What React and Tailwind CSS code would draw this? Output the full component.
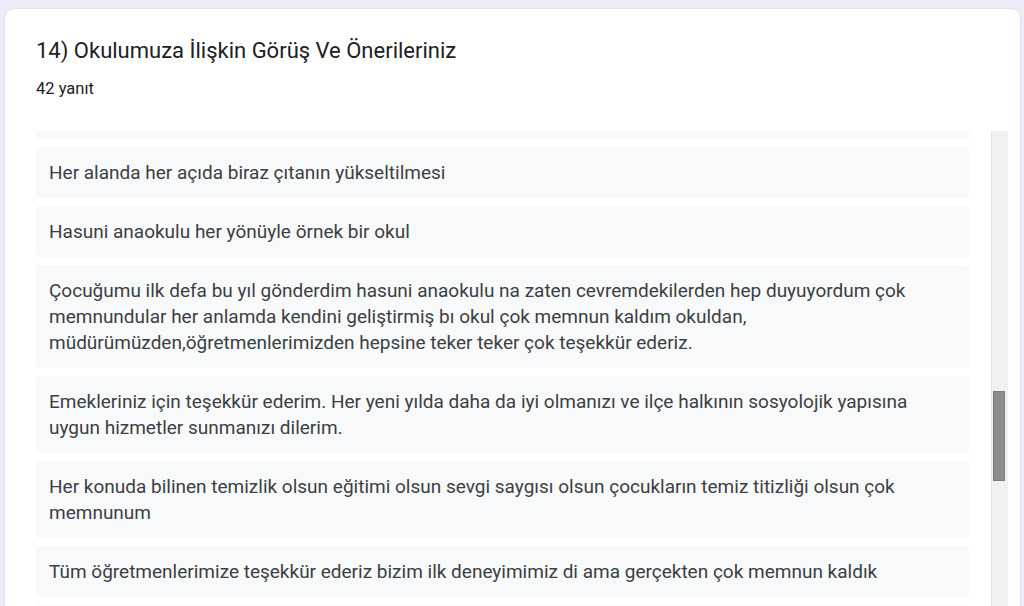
import React from 'react';

const responses = [
  'Okulumuzun tüm çalışanlarına teşekkür ederiz',
  'Her alanda her açıda biraz çıtanın yükseltilmesi',
  'Hasuni anaokulu her yönüyle örnek bir okul',
  'Çocuğumu ilk defa bu yıl gönderdim hasuni anaokulu na zaten cevremdekilerden hep duyuyordum çok memnundular her anlamda kendini geliştirmiş bı okul çok memnun kaldım okuldan, müdürümüzden,öğretmenlerimizden hepsine teker teker çok teşekkür ederiz.',
  'Emekleriniz için teşekkür ederim. Her yeni yılda daha da iyi olmanızı ve ilçe halkının sosyolojik yapısına uygun hizmetler sunmanızı dilerim.',
  'Her konuda bilinen temizlik olsun eğitimi olsun sevgi saygısı olsun çocukların temiz titizliği olsun çok memnunum',
  'Tüm öğretmenlerimize teşekkür ederiz bizim ilk deneyimimiz di ama gerçekten çok memnun kaldık',
  'Her şey için teşekkürler',
];

export default function App() {
  return (
    <div className="h-[606px] overflow-hidden bg-[#f0ebf8] pt-2 pl-1 pr-[3px] font-['Roboto',sans-serif]">
      <div className="bg-white rounded-[10px] border border-[#e3e0ea] h-[640px] pl-[31px] pr-[12px] pt-[27px]">
        <h2 className="text-[22px] leading-[30px] text-[#202124]">
          14) Okulumuza İlişkin Görüş Ve Önerileriniz
        </h2>
        <p className="mt-[12px] text-[16.5px] leading-[22px] text-[#202124]">42 yanıt</p>

        <div className="mt-[31px] flex h-[476px]">
          <div className="w-[933px] overflow-hidden">
            <div className="-mt-[43px] flex flex-col gap-2">
              {responses.map((text, i) => (
                <div
                  key={i}
                  className="bg-[#f8f9fa] rounded-[4px] px-[13px] py-[12.5px] text-[19px] leading-[26px] text-[#3c4043]"
                >
                  {text}
                </div>
              ))}
            </div>
          </div>
          <div className="ml-[22px] w-[17px] bg-[#f1f1f1] border-l border-[#e2e2e2] pt-[260px] pl-[1px]">
            <div className="w-[12px] h-[90px] bg-[#8c8c8c] border border-[#7d7d7d]" />
          </div>
        </div>
      </div>
    </div>
  );
}
